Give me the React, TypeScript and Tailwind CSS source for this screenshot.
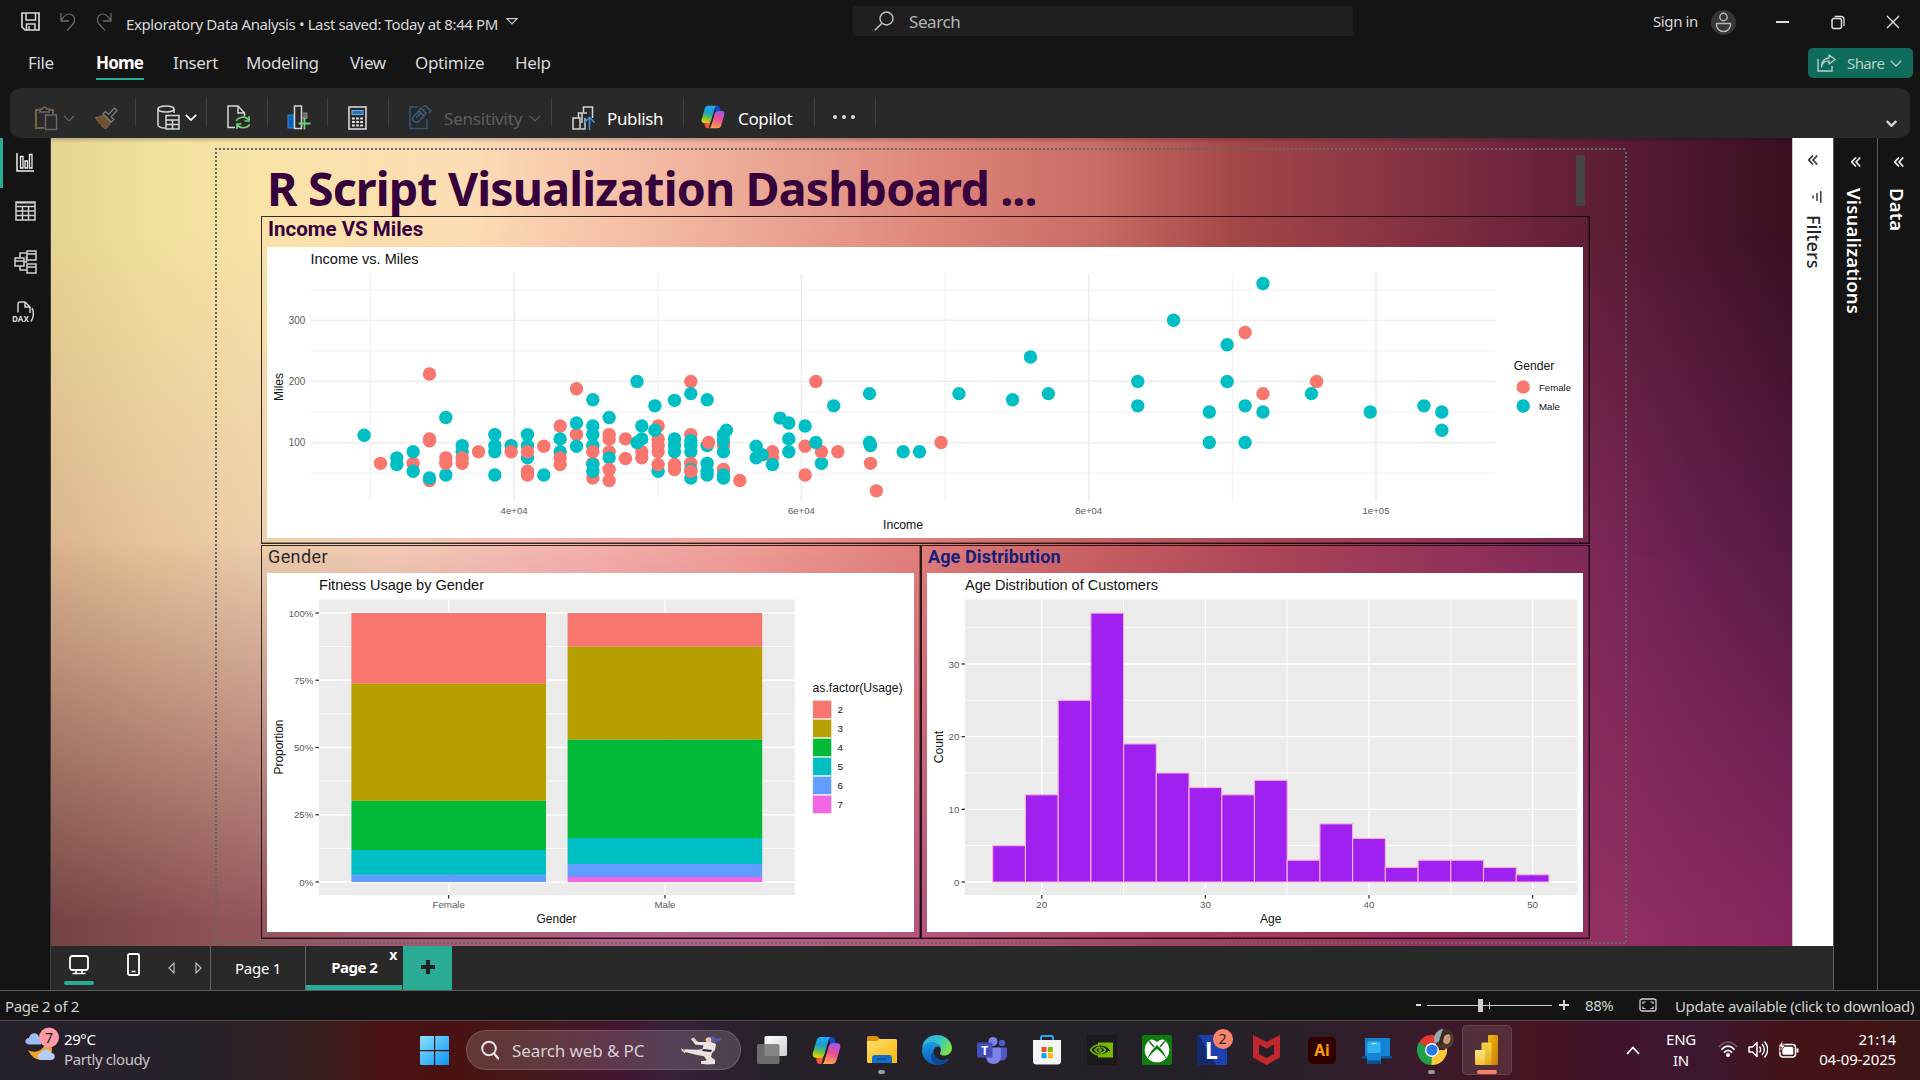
import React from "react";

type P = [number, number, 0 | 1];
const K = (k: number) => 29562 + 1137 * k;
const F = 0;
const M = 1;

/* [income, miles, gender] in drawing order */
const POINTS: P[] = [
  [K(0), 112, M],
  [K(1), 66, F],
  [K(2), 75, M], [K(2), 64, M],
  [K(3), 66, F], [K(3), 85, M], [K(3), 53, M],
  [K(4), 212, F], [K(4), 106, F], [K(4), 103, F], [K(4), 38, F], [K(4), 42, M],
  [K(5), 141, M], [K(5), 47, M], [K(5), 75, F], [K(5), 66, F],
  [K(6), 95, M], [K(6), 85, M], [K(6), 75, F], [K(6), 66, F],
  [K(7), 85, F],
  [K(8), 113, M], [K(8), 95, M], [K(8), 85, M], [K(8), 47, M],
  [K(9), 95, M], [K(9), 85, F],
  [K(10), 113, M], [K(10), 95, M], [K(10), 75, M], [K(10), 85, F], [K(10), 53, F], [K(10), 47, F],
  [K(11), 94, F], [K(11), 47, M],
  [K(12), 127, F], [K(12), 85, M], [K(12), 106, M], [K(12), 75, F], [K(12), 64, F],
  [K(13), 188, F], [K(13), 113, F], [K(13), 132, M], [K(13), 94, M],
  [K(14), 170, M], [K(14), 127, M], [K(14), 113, M], [K(14), 95, M], [K(14), 66, F], [K(14), 85, F], [K(14), 42, F], [K(14), 64, M], [K(14), 53, M],
  [K(15), 141, M], [K(15), 113, F], [K(15), 106, F], [K(15), 85, F], [K(15), 75, M], [K(15), 56, F], [K(15), 38, F],
  [K(16), 106, F], [K(16), 74, F],
  [K(17), 127, M], [K(17), 85, F], [K(17), 75, F],
  [48556, 200, M], [48556, 100, M], [K(17), 106, M],
  [K(18), 127, F], [K(18), 106, F], [K(18), 95, F], [K(18), 85, F], [K(18), 53, M], [K(18), 64, F],
  [49801, 160, M], [49801, 120, M],
  [K(19), 169, M], [K(19), 106, M], [K(19), 95, M], [K(19), 85, M], [K(19), 64, F], [K(19), 56, F],
  [K(20), 200, F], [K(20), 180, M], [K(20), 113, F], [K(20), 103, M], [K(20), 95, M], [K(20), 85, M], [K(20), 42, M], [K(20), 66, F], [K(20), 56, M], [K(20), 53, F],
  [K(21), 170, M], [K(21), 95, M], [K(21), 66, M], [K(21), 53, M], [K(21), 47, M], [53536, 100, F],
  [K(22), 95, F], [K(22), 56, F], [K(22), 113, M], [K(22), 103, M], [K(22), 85, M], [K(22), 47, M], [K(22), 42, M], [54781, 120, M],
  [K(23), 38, F],
  [K(24), 94, M], [K(24), 75, M],
  [K(25), 85, F], [K(25), 75, F], [K(25), 64, M], [57271, 80, M],
  [58516, 140, M], [K(26), 132, M], [K(26), 106, M], [K(26), 85, M],
  [K(27), 127, M], [K(27), 94, F], [K(27), 47, F],
  [K(28), 66, M], [K(28), 85, F], [61006, 200, F], [61006, 100, M],
  [K(29), 85, F],
  [62251, 160, M], [64741, 180, M], [64741, 100, M], [64809, 95, M], [64809, 66, F],
  [65220, 21, F], [67083, 85, M], [68220, 85, M], [69721, 100, F],
  [70966, 180, M], [74701, 170, M], [75946, 240, M], [77191, 180, M],
  [83416, 200, M], [83416, 160, M], [85906, 300, M], [88396, 150, M], [88396, 100, M],
  [89641, 260, M], [89641, 200, M], [90886, 280, F], [90886, 160, M], [90886, 100, M],
  [92131, 360, M], [92131, 180, F], [92131, 150, M], [95508, 180, M], [95866, 200, F],
  [99601, 150, M], [103336, 160, M], [104581, 150, M], [104581, 120, M],
];

const LS = "'Liberation Sans', Arial, sans-serif";
const sx = (v: number) => 514.1 + (v - 40000) * 0.014365;
const sy = (m: number) => 503.7 - 0.6115 * m;

function Tx(p: { x: number; y: number; w?: number; s: number; c?: string; a?: "start" | "middle" | "end"; t: string; r?: boolean }) {
  return (
    <text
      x={p.x}
      y={p.y}
      fontSize={p.s}
      fill={p.c ?? "#111"}
      textAnchor={p.a ?? "start"}
      textLength={p.w}
      lengthAdjust="spacingAndGlyphs"
      fontFamily={LS}
      transform={p.r ? `rotate(-90 ${p.x} ${p.y})` : undefined}
    >
      {p.t}
    </text>
  );
}

function Scatter() {
  return (
    <svg className="block h-full w-full" viewBox="267 247 1316 291" preserveAspectRatio="none">
      <rect x="267" y="247" width="1316" height="291" fill="#fff" />
      {[50, 150, 250, 350].map((m) => (
        <line key={m} x1="310.5" x2="1495.7" y1={sy(m)} y2={sy(m)} stroke="#f3f3f3" strokeWidth="1" />
      ))}
      {[30000, 50000, 70000, 90000].map((v) => (
        <line key={v} y1="273" y2="501" x1={sx(v)} x2={sx(v)} stroke="#f1f1f1" strokeWidth="1" />
      ))}
      {[100, 200, 300].map((m) => (
        <g key={m}>
          <line x1="310.5" x2="1495.7" y1={sy(m)} y2={sy(m)} stroke="#ebebeb" strokeWidth="1.2" />
          <Tx x={305.3} y={sy(m) + 3.8} s={10} w={16.5} c="#5a5a5a" a="end" t={String(m)} />
        </g>
      ))}
      {[40000, 60000, 80000, 100000].map((v, i) => (
        <g key={v}>
          <line y1="273" y2="501" x1={sx(v)} x2={sx(v)} stroke="#ebebeb" strokeWidth="1.5" />
          <Tx x={sx(v)} y={514} s={9.8} w={27} c="#5a5a5a" a="middle" t={["4e+04", "6e+04", "8e+04", "1e+05"][i]} />
        </g>
      ))}
      {POINTS.map(([x, y, g], i) => (
        <circle key={i} cx={sx(x)} cy={sy(y)} r="6.7" fill={g ? "#00bfc4" : "#f8766d"} />
      ))}
      <Tx x={310.5} y={263.8} s={14.2} w={108} t="Income vs. Miles" />
      <Tx x={903} y={529} s={12} w={40} a="middle" t="Income" />
      <Tx x={282.5} y={387} s={12} w={28} a="middle" t="Miles" r />
      <Tx x={1513.7} y={369.6} s={12} w={40.5} t="Gender" />
      <circle cx="1523.2" cy="387" r="6.7" fill="#f8766d" />
      <circle cx="1523.2" cy="406" r="6.7" fill="#00bfc4" />
      <Tx x={1539} y={391} s={9.8} w={32} t="Female" />
      <Tx x={1539} y={410} s={9.8} w={21} t="Male" />
    </svg>
  );
}

const USAGE = ["#f8766d", "#b79f00", "#00ba38", "#00bfc4", "#619cff", "#f564e3"];

function Stack(p: { x: number; ys: number[] }) {
  return (
    <g>
      {p.ys.slice(0, -1).map((y, i) => (
        <rect key={i} x={p.x} y={y} width="194.6" height={p.ys[i + 1] - y} fill={USAGE[i]} />
      ))}
    </g>
  );
}

function Usage() {
  return (
    <svg className="block h-full w-full" viewBox="267 573 647 359" preserveAspectRatio="none">
      <rect x="267" y="573" width="647" height="359" fill="#fff" />
      <rect x="319" y="599.5" width="475.6" height="295.5" fill="#ebebeb" />
      {[646.6, 713.9, 781.1, 848.4].map((y) => (
        <line key={y} x1="319" x2="794.6" y1={y} y2={y} stroke="#fff" strokeWidth="0.8" />
      ))}
      {["100%", "75%", "50%", "25%", "0%"].map((t, i) => (
        <g key={t}>
          <line x1="319" x2="794.6" y1={613 + i * 67.25} y2={613 + i * 67.25} stroke="#fff" strokeWidth="1.4" />
          <line x1="315.5" x2="319" y1={613 + i * 67.25} y2={613 + i * 67.25} stroke="#333" strokeWidth="1.3" />
          <Tx x={313.3} y={616.6 + i * 67.25} s={9.8} w={[24.5, 19.3, 19.3, 19.3, 14][i]} c="#5a5a5a" a="end" t={t} />
        </g>
      ))}
      {[448.7, 665].map((x, i) => (
        <g key={x}>
          <line x1={x} x2={x} y1="599.5" y2="895" stroke="#fff" strokeWidth="1.4" />
          <line x1={x} x2={x} y1="895" y2="898.5" stroke="#333" strokeWidth="1.3" />
          <Tx x={x} y={908} s={9.8} w={[32.5, 21][i]} c="#5a5a5a" a="middle" t={["Female", "Male"][i]} />
        </g>
      ))}
      <Stack x={351.4} ys={[613, 683.7, 800.8, 850, 874.9, 882]} />
      <Stack x={567.6} ys={[613, 646.8, 739.7, 838, 864, 877, 882]} />
      <Tx x={319} y={590} s={14.2} w={165} t="Fitness Usage by Gender" />
      <Tx x={556.5} y={922.7} s={12} w={40} a="middle" t="Gender" />
      <Tx x={282.7} y={747} s={12} w={55} a="middle" t="Proportion" r />
      <Tx x={812.6} y={692} s={12} w={90} t="as.factor(Usage)" />
      {USAGE.map((c, i) => (
        <g key={c}>
          <rect x="812.8" y={700.3 + i * 19} width="18.6" height="18.2" fill={c} stroke="#ebebeb" strokeWidth="0.6" />
          <Tx x={837.5} y={712.8 + i * 19} s={9.8} t={String(i + 2)} />
        </g>
      ))}
    </svg>
  );
}

const COUNTS = [5, 12, 25, 37, 19, 15, 13, 12, 14, 3, 8, 6, 2, 3, 3, 2, 1];

function Ages() {
  const ax = (v: number) => 1041.8 + (v - 20) * 16.36;
  const ay = (v: number) => 882 - v * 7.267;
  return (
    <svg className="block h-full w-full" viewBox="927 573 656 359" preserveAspectRatio="none">
      <rect x="927" y="573" width="656" height="359" fill="#fff" />
      <rect x="965" y="599.5" width="612.3" height="295.5" fill="#ebebeb" />
      {[5, 15, 25, 35].map((v) => (
        <line key={v} x1="965" x2="1577.3" y1={ay(v)} y2={ay(v)} stroke="#fff" strokeWidth="0.8" />
      ))}
      {[25, 35, 45].map((v) => (
        <line key={v} y1="599.5" y2="895" x1={ax(v)} x2={ax(v)} stroke="#fff" strokeWidth="0.8" />
      ))}
      {[0, 10, 20, 30].map((v) => (
        <g key={v}>
          <line x1="965" x2="1577.3" y1={ay(v)} y2={ay(v)} stroke="#fff" strokeWidth="1.4" />
          <line x1="961.5" x2="965" y1={ay(v)} y2={ay(v)} stroke="#333" strokeWidth="1.3" />
          <Tx x={959.5} y={ay(v) + 3.6} s={9.8} c="#5a5a5a" a="end" t={String(v)} />
        </g>
      ))}
      {[20, 30, 40, 50].map((v) => (
        <g key={v}>
          <line y1="599.5" y2="895" x1={ax(v)} x2={ax(v)} stroke="#fff" strokeWidth="1.4" />
          <line x1={ax(v)} x2={ax(v)} y1="895" y2="898.5" stroke="#333" strokeWidth="1.3" />
          <Tx x={ax(v)} y={908} s={9.8} c="#5a5a5a" a="middle" t={String(v)} />
        </g>
      ))}
      {COUNTS.map((n, i) => (
        <rect key={i} x={ax(17 + 2 * i)} y={ay(n)} width="32.72" height={n * 7.267} fill="#a020f0" stroke="#f7b3d2" strokeWidth="1.1" />
      ))}
      <Tx x={965} y={590} s={14.2} w={193} t="Age Distribution of Customers" />
      <Tx x={1270.8} y={922.7} s={12} a="middle" t="Age" />
      <Tx x={943.3} y={747} s={12} w={32.5} a="middle" t="Count" r />
    </svg>
  );
}

function Chev({ c = "#d6d6d6", s = 1.5, w = 12, h = 7 }: { c?: string; s?: number; w?: number; h?: number }) {
  return (
    <svg width={w} height={h} viewBox="0 0 12 7" fill="none" stroke={c} strokeWidth={s} className="shrink-0">
      <path d="M.8.8 6 6 11.2.8" />
    </svg>
  );
}

function Svg({ w, h, children, vb }: { w: number; h: number; vb?: string; children: React.ReactNode }) {
  return (
    <svg width={w} height={h} viewBox={vb ?? `0 0 ${w} ${h}`} fill="none" className="shrink-0">
      {children}
    </svg>
  );
}

function Copilot({ id, size }: { id: string; size: number }) {
  return (
    <Svg w={size} h={size} vb="0 0 28 28">
      <defs>
        <linearGradient id={id + "a"} x1="0.5" y1="0" x2="0.3" y2="1">
          <stop offset="0" stopColor="#20a7f5" />
          <stop offset=".4" stopColor="#1aa0c8" />
          <stop offset=".7" stopColor="#6cc04a" />
          <stop offset="1" stopColor="#f5d400" />
        </linearGradient>
        <linearGradient id={id + "b"} x1="0.7" y1="0" x2="0.4" y2="1">
          <stop offset="0" stopColor="#a257e8" />
          <stop offset=".5" stopColor="#ee4f8f" />
          <stop offset="1" stopColor="#ffa44a" />
        </linearGradient>
      </defs>
      <path d="M16 1h3c1.600 0 2.600.8 3.100 2.400L23.500 8h-6z" fill="#1447c9" />
      <path d="M9 27H7.500c-1.500 0-2.600-.9-3-2.400L4 20h7z" fill="#f2583e" />
      <path d="M8.500 1h9.800c-1.500.4-2 1.800-2.500 3.600L12 17.500c-.7 2.300-1.800 3.500-4.200 3.500H3.500C1 21 .2 19 .8 16.700L4.300 4.500C5 2.200 6.400 1 8.500 1z" fill={`url(#${id}a)`} />
      <path d="M19.500 27H9.700c1.500-.4 2-1.800 2.500-3.600L16 10.500C16.700 8.200 17.800 7 20.200 7h4.300c2.500 0 3.300 2 2.700 4.300l-3.500 12.200c-.7 2.300-2.100 3.500-4.200 3.500z" fill={`url(#${id}b)`} />
    </Svg>
  );
}

const Sep = () => <div className="mb-[2px] h-[30px] w-px shrink-0 bg-[#404040]" />;

function TitleBar() {
  return (
    <div className="flex h-[44px] shrink-0 items-start text-[15px] leading-none tracking-[-0.3px] text-[#d8d8d8]">
      <div className="flex w-[126px] gap-[20px] pt-[12px] pl-[21px]">
        <Svg w={19} h={19}>
          <path d="M1 1h17v17H4l-3-3z" stroke="#d8d8d8" strokeWidth="1.700" />
          <path d="M5 1v7h9.500V1M5.500 18v-6h8.500v6M8 14v4" stroke="#d8d8d8" strokeWidth="1.500" />
        </Svg>
        <Svg w={16} h={19}>
          <path d="M1 1v8h8M1.500 8.500C4 3.500 8 1 11.500 2.500S15.500 9 13 12L7 18.500" stroke="#686868" strokeWidth="1.300" />
        </Svg>
        <Svg w={16} h={19}>
          <path d="M15 1v8H7M14.500 8.500C12 3.500 8 1 4.500 2.500S.5 9 3 12l6 6.500" stroke="#686868" strokeWidth="1.300" />
        </Svg>
      </div>
      <div className="w-[380px] pt-[17px] tracking-[-0.39px] whitespace-nowrap">Exploratory Data Analysis • Last saved: Today at 8:44 PM</div>
      <div className="w-[347px] pt-[18px]">
        <Svg w={12} h={7}>
          <path d="M1 .7h10L6 6z" stroke="#c8c8c8" strokeWidth="1.200" />
        </Svg>
      </div>
      <div className="mt-[6px] flex h-[30px] w-[500px] items-center rounded-[3px] bg-[#1f1f1f] pl-[21px] text-[17px] tracking-[-0.4px] text-[#b4b4b4]">
        <Svg w={20} h={20}>
          <circle cx="12.500" cy="7.500" r="6.500" stroke="#c4c4c4" strokeWidth="1.400" />
          <path d="M8 12.300.8 19.300" stroke="#c4c4c4" strokeWidth="1.500" />
        </Svg>
        <span className="pl-[15px]">Search</span>
      </div>
      <div className="ml-auto flex h-[44px] items-center">
        <span className="w-[58px] pb-[1px] tracking-[-0.4px] whitespace-nowrap">Sign in</span>
        <Svg w={25} h={25}>
          <circle cx="12.500" cy="12.500" r="12.500" fill="#363636" />
          <circle cx="12.500" cy="7" r="3.700" stroke="#b8b8b8" strokeWidth="1.400" />
          <path d="M5.500 13.500h14c.8 4-2.500 8-7 8s-7.800-4-7-8z" stroke="#b8b8b8" strokeWidth="1.400" />
        </Svg>
        <div className="ml-[40px] h-[1.500px] w-[13px] bg-[#dedede]" />
        <div className="ml-[42px]">
          <Svg w={14} h={15}>
            <rect x="1" y="3.500" width="9.500" height="10" rx="2" stroke="#dedede" strokeWidth="1.500" />
            <path d="M3.500 1.500H10c2 0 3 1 3 3V11" stroke="#dedede" strokeWidth="1.300" />
          </Svg>
        </div>
        <div className="mr-[20px] ml-[41px]">
          <Svg w={14} h={14}>
            <path d="M1 1l12 12M13 1 1 13" stroke="#e0e0e0" strokeWidth="1.400" />
          </Svg>
        </div>
      </div>
    </div>
  );
}

function MenuBar() {
  return (
    <div className="flex h-[44px] shrink-0 items-start pt-[9px] pl-[28px] text-[17px] leading-none tracking-[-0.35px] text-[#d8d8d8]">
      <span className="w-[68px] pt-[1px]">File</span>
      <div className="w-[77px]">
        <div className="h-[27px] w-[48px] border-b-[2px] border-[#2aab94] pt-[1px] font-bold tracking-[-0.8px] text-white">Home</div>
      </div>
      <span className="w-[73px] pt-[1px]">Insert</span>
      <span className="w-[104px] pt-[1px]">Modeling</span>
      <span className="w-[65px] pt-[1px]">View</span>
      <span className="w-[100px] pt-[1px]">Optimize</span>
      <span className="pt-[1px]">Help</span>
      <div className="-mt-[5px] mr-[7px] ml-auto flex h-[30px] w-[105px] items-center rounded-[5px] bg-[#0f6b5a] pl-[9px] text-[15px] text-[#b9cfc9]">
        <Svg w={19} h={18}>
          <path d="M1 5v12h14v-5" stroke="#b9cfc9" strokeWidth="1.400" />
          <path d="M4.500 13C5 8.500 8 6.800 12 6.800V10L18.200 5.500 12 1v3C7 4.300 4.500 8 4.500 13z" stroke="#b9cfc9" strokeWidth="1.300" strokeLinejoin="round" />
        </Svg>
        <span className="pl-[11px] tracking-[-0.6px]">Share</span>
        <div className="ml-auto pr-[11px]">
          <Chev c="#b9cfc9" s={1.3} />
        </div>
      </div>
    </div>
  );
}

function Ribbon() {
  return (
    <div className="z-10 mr-[10px] ml-[10px] flex h-[50px] shrink-0 items-center rounded-[10px] bg-[#292929] text-[17px] leading-none tracking-[-0.35px] text-white">
      <div className="flex w-[125px] items-center pt-[11px] pl-[25px]">
        <Svg w={23} h={25}>
          <path d="M4 4H1v18h8M15 4h3v4" stroke="#7a6242" strokeWidth="2" />
          <path d="M5 6V3h2.500C8 .5 11 .5 11.500 3H14v3z" stroke="#6a6a6a" strokeWidth="1.500" />
          <rect x="10.500" y="9" width="11" height="14.500" stroke="#6a6a6a" strokeWidth="1.500" />
        </Svg>
        <div className="ml-[5px]"><Chev c="#6a6a6a" s={1.2} /></div>
        <div className="ml-[19px]">
          <Svg w={24} h={23}>
            <path d="M1.500 10.500c4 0 6-1 8.500-3l7 7c-1 3-3 5-5.500 7.500-1-1.500-2-2-3.500-2.500 0-1-.5-2-1.500-2.500C5 15.500 2.500 13 1.500 10.500z" fill="#6e5230" stroke="#8a6f47" strokeWidth="1" />
            <path d="M9 7l2.500-2.500 3 3L20.500 1 23 3.500 17 10l3 2.500-3 2.500z" stroke="#7a7a7a" strokeWidth="1.300" />
          </Svg>
        </div>
      </div>
      <Sep />
      <div className="flex w-[70px] items-center pt-[9px] pl-[21px]">
        <Svg w={23} h={25}>
          <ellipse cx="9" cy="4" rx="8" ry="3" stroke="#d6d6d6" strokeWidth="1.500" />
          <path d="M1 4v16c0 1.500 3 3 7 3M17 4v4" stroke="#d6d6d6" strokeWidth="1.500" />
          <path d="M9 10.500h13V24H9zM9 15h13M9 19.500h13M15.500 15v9" stroke="#d6d6d6" strokeWidth="1.500" />
        </Svg>
        <div className="ml-[5px]"><Chev c="#fff" s={1.7} /></div>
      </div>
      <Sep />
      <div className="flex w-[60px] items-center pt-[9px] pl-[20px]">
        <Svg w={24} h={25}>
          <path d="M8 22.500H1V1h10l6.500 7v3M11 1v7h6.500" stroke="#d6d6d6" strokeWidth="1.500" />
          <path d="M9.500 16c1-4 9.500-6 12.500-.500M22 11v5h-4.500M22.500 19c-1 4-9.500 5.500-12.500.5M10 24v-5h4.500" stroke="#73cf7c" strokeWidth="1.600" />
        </Svg>
      </div>
      <Sep />
      <div className="flex w-[59px] items-center pt-[9px] pl-[19px]">
        <Svg w={25} h={25}>
          <rect x="1" y="10" width="6" height="13" fill="#0b62b5" stroke="#2f8ce0" />
          <rect x="7.500" y="1" width="7" height="22.500" stroke="#d6d6d6" strokeWidth="1.500" />
          <path d="M15.500 8h4.500v5.500h-4.500" fill="#6a6a6a" stroke="#8a8a8a" />
          <path d="M17.500 12.500v12M11.500 18.500h12" stroke="#6fd07a" strokeWidth="1.800" />
        </Svg>
      </div>
      <Sep />
      <div className="flex w-[60px] items-center pt-[9px] pl-[20px]">
        <Svg w={19} h={24}>
          <rect x="1" y="1" width="17" height="22" stroke="#d6d6d6" strokeWidth="1.600" />
          <rect x="4" y="4.500" width="11" height="4" fill="#2d6fb0" stroke="#63b0ee" />
          <path d="M4 12.500h11M4 16h11M4 19.500h11" stroke="#e0e0e0" strokeWidth="2.200" strokeDasharray="2.800 1.300" />
        </Svg>
      </div>
      <Sep />
      <div className="flex w-[162px] items-center pt-[9px] pl-[20px] text-[#5e5e5e]">
        <Svg w={23} h={25}>
          <path d="M9 2H1v21.500h17V14" stroke="#2f5673" strokeWidth="1.600" />
          <path d="M4 12l6-6 5 5-6 6c-3 1-6-2-5-5zM10 5l2-2 5 5-1.500 2M14 2l2-1.500L22 6l-2 2M7 13l5-5" stroke="#35607f" strokeWidth="1.500" />
        </Svg>
        <span className="ml-[12px] w-[83px] pt-[2px] text-[17px] tracking-[-0.2px]">Sensitivity</span>
        <div className="pt-[1px] pl-[2px]"><Chev c="#5e5e5e" s={1.2} /></div>
      </div>
      <Sep />
      <div className="flex w-[131px] items-center pt-[9px] pl-[20px]">
        <Svg w={24} h={24}>
          <path d="M1 12h7v11H1zM6.500 11.500V7h4.500M11.500 6V1h9v11M15 7h-5v10" stroke="#d6d6d6" strokeWidth="1.500" />
          <path d="M9 23h4V12" stroke="#d6d6d6" strokeWidth="1.400" />
          <path d="M17.500 24V12M12.500 16.500l5-5 5 5" stroke="#3c93dc" strokeWidth="1.600" />
        </Svg>
        <span className="ml-[11px] pt-[2px]">Publish</span>
      </div>
      <Sep />
      <div className="flex w-[130px] items-center pt-[7px] pl-[17px]">
        <Copilot id="r" size={24} />
        <span className="ml-[13px] pt-[4px]">Copilot</span>
      </div>
      <Sep />
      <div className="flex w-[60px] items-center gap-[5px] pt-[8px] pl-[18px]">
        <i className="size-[4px] rounded-full bg-[#dcdcdc]" />
        <i className="size-[4px] rounded-full bg-[#dcdcdc]" />
        <i className="size-[4px] rounded-full bg-[#dcdcdc]" />
      </div>
      <Sep />
      <div className="mr-[13px] ml-auto pt-[20px]"><Chev s={2.6} w={11} h={7} /></div>
    </div>
  );
}

function Rail() {
  const c = { stroke: "#d0d0d0", strokeWidth: 1.5 };
  return (
    <div className="flex w-[51px] shrink-0 flex-col border-r border-[#3d3d3d] bg-[#141414]">
      <div className="flex h-[50px] items-center border-l-[3px] border-[#2aab94] pl-[13px] pb-[2px]">
        <Svg w={18} h={19}>
          <path d="M1 0v18h17" {...c} stroke="#f0f0f0" />
          <path d="M4.500 3.500h2.500V15H4.500zM9 8h2.500v7H9zM13.500 1.500H16V15h-2.500z" {...c} stroke="#f0f0f0" strokeWidth={1.3} />
        </Svg>
      </div>
      <div className="flex h-[47px] items-center justify-center pb-[1px]">
        <Svg w={21} h={20}>
          <path d="M1 1h19v18H1zM1 5.500h19M1 10h19M1 14.500h19M7.500 5.500V19M13.500 5.500V19" {...c} />
          <path d="M1 1.800h19" {...c} />
        </Svg>
      </div>
      <div className="flex h-[53px] items-center justify-center">
        <Svg w={23} h={24}>
          <path d="M13 1h9v9h-9zM13 4h9M13 14h9v9h-9zM13 17h9M1 8h9v8H1zM1 11h9M13 3H6v5M6 16v4h7M10 12h2.500V6" {...c} />
        </Svg>
      </div>
      <div className="flex h-[48px] items-center justify-center pr-[2px]">
        <Svg w={26} h={22}>
          <path d="M7 11.500V3c0-1.500 1-2 2-2h5l5 5v6M14 1v5h5M21 7c2 3 2 9-1 13.500" {...c} />
          <text x="1" y="20.500" fontFamily="'Noto Sans', sans-serif" fontWeight="700" fontSize="9" fill="#d8d8d8" textLength="17" lengthAdjust="spacingAndGlyphs">DAX</text>
        </Svg>
      </div>
    </div>
  );
}

function Report() {
  return (
    <div className="relative h-[808px] w-[1741px] overflow-hidden bg-[linear-gradient(90deg,#e6d592_0%,#f1e19e_6%,#fae3a9_13%,#fcdcb5_24%,#f5bfa6_33%,#e9a391_42%,#dc8277_52%,#c86c65_60%,#a44748_68%,#883444_77%,#68213a_86%,#521a32_92%,#3a1022_100%)]">
      <div className="absolute inset-0 bg-[linear-gradient(90deg,#d9b38e_0%,#e6c39b_6%,#eccdac_12%,#f2cab6_20%,#f5b2ae_30%,#ef9c96_40%,#e07e79_50%,#c95f62_60%,#ad4558_70%,#93345a_80%,#802958_88%,#682050_94%,#561a44_100%)] [mask-image:linear-gradient(180deg,transparent_12%,black_52%)]" />
      <div className="absolute inset-0 bg-[linear-gradient(90deg,#754444_0%,#8f5358_10%,#a25970_20%,#b26189_35%,#b4567c_50%,#a83f60_65%,#98305f_80%,#903062_90%,#84265e_100%)] [mask-image:linear-gradient(180deg,transparent_50%,black_97%)]" />
      <div className="absolute inset-x-0 top-0 h-[5px] bg-gradient-to-b from-black/20 to-transparent" />
      <div className="relative flex h-full flex-col pt-[10px] pl-[164px]">
        <div className="h-[2px] w-[1412px] bg-[repeating-linear-gradient(90deg,#666_0_2px,transparent_2px_4px)]" />
        <div className="flex h-[792px] w-[1412px]">
          <div className="w-[2px] bg-[repeating-linear-gradient(180deg,transparent_0_2px,#666_2px_4px)]" />
          <div className="ml-[44px] flex w-[1329px] flex-col">
            <div className="flex h-[66px] items-start justify-between">
              <div className="pt-[15px] pl-[6px] font-['Noto_Sans',sans-serif] text-[46.500px] leading-none font-bold tracking-[-0.85px] whitespace-nowrap text-[#36003d]">
                R Script Visualization Dashboard ...
              </div>
              <div className="mt-[5px] mr-[5px] h-[51px] w-[9px] bg-[#444]" />
            </div>
            <div className="h-[328px] border border-black/80 px-[5px] shadow-[inset_-1px_-1px_0_rgba(0,0,0,0.35)]">
              <div className="h-[30px] pl-[1px] font-['Roboto',sans-serif] text-[20.500px] leading-[24px] font-bold whitespace-nowrap text-[#36003d]">Income VS Miles</div>
              <div className="h-[291px] w-[1316px]"><Scatter /></div>
            </div>
            <div className="mt-px flex h-[394px]">
              <div className="w-[660px] border border-black/80 px-[5px] shadow-[inset_-1px_-1px_0_rgba(0,0,0,0.35)]">
                <div className="h-[27px] pl-[1px] font-['Roboto',sans-serif] text-[18px] leading-[21px] tracking-[0.4px] text-[#2a2a2a]">Gender</div>
                <div className="h-[359px] w-[647px]"><Usage /></div>
              </div>
              <div className="w-[669px] border border-black/80 px-[5px] shadow-[inset_-1px_-1px_0_rgba(0,0,0,0.35)]">
                <div className="h-[27px] pl-[1px] font-['Roboto',sans-serif] text-[18px] leading-[21px] font-bold tracking-[0.1px] text-[#121f7c]">Age Distribution</div>
                <div className="h-[359px] w-[656px]"><Ages /></div>
              </div>
            </div>
          </div>
          <div className="ml-auto w-[2px] bg-[repeating-linear-gradient(180deg,transparent_0_2px,#666_2px_4px)]" />
        </div>
        <div className="h-[2px] w-[1412px] bg-[repeating-linear-gradient(90deg,#666_0_2px,transparent_2px_4px)]" />
      </div>
    </div>
  );
}

function Dbl({ c }: { c: string }) {
  return (
    <Svg w={10} h={10}>
      <path d="M5 .5.8 5 5 9.500M9.300.5 5.100 5l4.200 4.500" stroke={c} strokeWidth="1.700" />
    </Svg>
  );
}

function PageTabs() {
  return (
    <div className="flex h-[44px] shrink-0 bg-[#292929] text-[15px] leading-none tracking-[-0.3px] text-white">
      <div className="flex w-[159px]">
        <div className="flex w-[51px] flex-col items-center pt-[9px] pl-[4px]">
          <Svg w={20} h={20}>
            <rect x="1" y="1" width="18" height="14" rx="2.500" stroke="#fff" strokeWidth="1.800" />
            <path d="M7 15v3M13 15v3M3.500 18.500h13" stroke="#fff" strokeWidth="1.600" />
          </Svg>
          <div className="mt-[6px] h-[4px] w-[30px] rounded-full bg-[#2aab94]" />
        </div>
        <div className="w-[66px] pt-[7px] pl-[25px]">
          <Svg w={13} h={23}>
            <rect x="1" y="1" width="11" height="21" rx="1.500" stroke="#fff" strokeWidth="1.800" />
            <path d="M4.500 18.500h4" stroke="#fff" strokeWidth="1.600" />
          </Svg>
        </div>
        <div className="flex gap-[20px] pt-[16px]">
          <Svg w={7} h={12}><path d="M6 1v10L1 6z" stroke="#b8b8b8" strokeWidth="1.200" /></Svg>
          <Svg w={7} h={12}><path d="M1 1v10l5-5z" stroke="#b8b8b8" strokeWidth="1.200" /></Svg>
        </div>
      </div>
      <div className="flex w-[96px] items-center justify-center border-x border-[#666]">Page 1</div>
      <div className="flex w-[96px] items-start justify-end border-b-[5px] border-[#2aab94] font-bold">
        <span className="w-[58px] pt-[14px] tracking-[-0.5px]">Page 2</span>
        <span className="pt-[2px] pr-[5px] text-[14px]">x</span>
      </div>
      <div className="ml-px flex w-[49px] items-center justify-center bg-[#2aab94] pb-[2px]">
        <Svg w={14} h={14}><path d="M7 0v14M0 7h14" stroke="#222" strokeWidth="4" /></Svg>
      </div>
    </div>
  );
}

function StatusBar() {
  return (
    <div className="flex h-[30px] shrink-0 items-center border-t border-[#5c5c5c] bg-[#141414] pl-[5px] text-[15px] leading-none tracking-[-0.4px] text-[#d0d0d0]">
      <span className="pt-[2px]">Page 2 of 2</span>
      <div className="ml-auto flex h-full items-center pb-[1px]">
        <div className="h-[2px] w-[5px] bg-[#ddd]" />
        <div className="ml-[6px] flex w-[125px] items-center">
          <div className="h-px w-[51px] bg-[#ccc]" />
          <div className="h-[13px] w-[5px] bg-[#ccc]" />
          <div className="h-px w-[6px] bg-[#ccc]" />
          <div className="h-[7px] w-px bg-[#ccc]" />
          <div className="h-px flex-1 bg-[#ccc]" />
        </div>
        <div className="ml-[7px]"><Svg w={10} h={10}><path d="M5 0v10M0 5h10" stroke="#ddd" strokeWidth="1.800" /></Svg></div>
        <span className="ml-[16px] w-[54px]">88%</span>
        <Svg w={18} h={14}>
          <rect x="1" y="1" width="16" height="12" rx="2" stroke="#d0d0d0" strokeWidth="1.300" />
          <path d="M4 6V4h2.500M11.500 4H14v2M14 8.500v2h-2.500M6.500 10.500H4v-2" stroke="#d0d0d0" strokeWidth="1.200" />
        </Svg>
        <span className="ml-[18px] w-[245px] pt-[3px] tracking-[-0.38px] whitespace-nowrap">Update available (click to download)</span>
      </div>
    </div>
  );
}

function TaskApp({ children, run, active }: { children: React.ReactNode; run?: boolean; active?: boolean }) {
  return (
    <div className="flex w-[55px] shrink-0 flex-col items-center pt-[4px]">
      <div className={active ? "flex h-[50px] w-[50px] flex-col items-center rounded-[5px] border border-white/10 bg-white/10" : "flex h-[50px] w-[50px] flex-col items-center border border-transparent"}>
        <div className="flex h-[44px] items-center pt-[5px] pb-[1px]">{children}</div>
        {run && <div className="mt-[1px] h-[4px] w-[7px] rounded-full bg-[#9a9a9a]" />}
        {active && <div className="mt-[1px] h-[4px] w-[20px] shrink-0 rounded-full bg-[#f7836a]" />}
      </div>
    </div>
  );
}

function Taskbar() {
  return (
    <div className="flex h-[60px] shrink-0 border-t border-[#55484c] bg-[linear-gradient(90deg,#25212a_0%,#27212a_11%,#35201f_16%,#4a1215_20%,#481312_24%,#45181c_28%,#461530_32%,#37203a_35%,#262129_40%,#242129_62%,#2b2029_68%,#3a1a2c_74%,#46141f_80%,#40142f_85%,#3c1730_89%,#441318_93%,#421316_97%,#3a1818_100%)] text-[15px] leading-none text-white">
      <div className="flex w-[420px] pt-[5px] pl-[25px]">
        <Svg w={35} h={38}>
          <path d="M3 24c7 4 16 1 18-9 6 3 8 10 4 15s-16 7-22-6z" fill="#f2a02c" />
          <path d="M5 18.500C-2 18.500 0 12 4 12c1-6 9-6 10-1 5 0 5 7.500 0 7.500z" fill="#9dbdf2" />
          <path d="M16 34c-5-1-4-7 0-7 1-5 9-5 10 0 5 0 5 7 0 7z" fill="#b3cdf8" />
          <circle cx="24" cy="11.500" r="10" fill="#ff9aa6" />
          <text x="24" y="16.500" textAnchor="middle" fontSize="14" fill="#1a1a1a" fontFamily="'Noto Sans', sans-serif">7</text>
        </Svg>
        <div className="ml-[4px] flex flex-col gap-[5px] pt-[6px] tracking-[-0.4px]">
          <span>29°C</span>
          <span className="whitespace-nowrap text-[#c9c5c8]">Partly cloudy</span>
        </div>
      </div>
      <div className="w-[46px] pt-[15px]">
        <Svg w={29} h={29}>
          <defs>
            <linearGradient id="win" x1="0" y1="0" x2="1" y2="1"><stop offset="0" stopColor="#8be0ff" /><stop offset="1" stopColor="#0a94f5" /></linearGradient>
          </defs>
          <path d="M0 1q0-1 1-1h13v14H0zM15.200 0H28q1 0 1 1v13H15.200zM0 15.200h14V29H1q-1 0-1-1zM15.200 15.200H29V28q0 1-1 1H15.200z" fill="url(#win)" />
        </Svg>
      </div>
      <div className="mt-[9px] flex h-[40px] w-[275px] items-center rounded-full border border-white/15 bg-white/15 pl-[14px] text-[17px] tracking-[-0.1px] text-[#d8d0d4]">
        <Svg w={18} h={20}>
          <circle cx="8" cy="8.500" r="6.800" stroke="#e8e4e6" strokeWidth="2" />
          <path d="M13 13.500l4.300 5" stroke="#e8e4e6" strokeWidth="2.400" strokeLinecap="round" />
        </Svg>
        <span className="ml-[13px] whitespace-nowrap">Search web &amp; PC</span>
        <div className="mr-[17px] ml-auto">
          <Svg w={42} h={30}>
            <path d="M26 4c3-4 8-3 9 0l6-1c-2 3-5 4-8 4l-6 1z" fill="#6257b0" />
            <circle cx="27.500" cy="5" r="2.800" fill="#f0c2a4" />
            <path d="M10 4l2-1 5 4 7 0 6 0 5 2-1 6-3 3-1 4 4 3v4l-8 .5-6-.8v-2.500l6-1-3-4-8-1.500-12-3 .5-2.500 13 .5 5-.5 1-4-8-.5z" fill="#ece3dc" />
            <path d="M22 14l9 1-1 2-9-1z" fill="#2a2433" />
            <path d="M0 13l4 2.500v3L1 16zM11 3l2-.500 2.500 3-2 1.500z" fill="#f0c2a4" />
          </Svg>
        </div>
      </div>
      <div className="ml-[3px] flex">
        <TaskApp>
          <Svg w={30} h={28}>
            <defs><linearGradient id="tv" x1="0" y1="0" x2="1" y2="1"><stop offset="0" stopColor="#fff" /><stop offset="1" stopColor="#cfcfcf" /></linearGradient></defs>
            <rect x="7.500" y="0" width="22.500" height="20" rx="1.500" fill="url(#tv)" />
            <rect x="0" y="8" width="22.500" height="20" rx="1.500" fill="#787878" fillOpacity=".88" />
          </Svg>
        </TaskApp>
        <TaskApp><Copilot id="t" size={29} /></TaskApp>
        <TaskApp run>
          <Svg w={30} h={27}>
            <defs><linearGradient id="fo" x1="0" y1="0" x2="1" y2="1"><stop offset="0" stopColor="#ffdf6b" /><stop offset="1" stopColor="#f9b60f" /></linearGradient></defs>
            <path d="M0 1.500Q0 0 1.500 0H10l3 3-3 4H0z" fill="#d99206" />
            <path d="M0 5h10l2-2h16.500q1.500 0 1.500 1.500V27H1.500Q0 27 0 25.500z" fill="url(#fo)" />
            <path d="M5 27v-5q0-3 3-3h14q3 0 3 3v5z" fill="#1070c8" />
            <path d="M10 23h10" stroke="#0a4c94" strokeWidth="1.500" />
          </Svg>
        </TaskApp>
        <TaskApp>
          <Svg w={30} h={30}>
            <defs>
              <linearGradient id="e1" x1="0" y1="0" x2="1" y2=".5"><stop offset="0" stopColor="#2aa8e8" /><stop offset=".6" stopColor="#36c8c0" /><stop offset="1" stopColor="#7be04c" /></linearGradient>
              <linearGradient id="e2" x1="0" y1="0" x2="0" y2="1"><stop offset="0" stopColor="#1b9be6" /><stop offset="1" stopColor="#0a5cb8" /></linearGradient>
            </defs>
            <path d="M0 13C1 5 7 0 15 0c9 0 15 7 15 13 0 5-4 7.500-8 7.500s-4.500-2-3.500-3.500c1.500-3-.5-7-5.500-7-6 0-12 2-13 3z" fill="url(#e1)" />
            <path d="M0 15C1 9 6 6.500 11 7s8 4 8 6c-3-3-7-1-7.500 3-.500 6 5 10 10.500 9 2-.3 4-1.500 5-1.500C25 28 20 30 15 30 7 30-.500 23.500 0 15z" fill="url(#e2)" />
            <path d="M11.500 16c-.5 6 5 10 10.500 9 2-.3 4-1.500 5-1.500-2 4-7 6.500-12 6.500-6-2-8-10-3.500-14z" fill="#0c4a94" />
          </Svg>
        </TaskApp>
        <TaskApp>
          <Svg w={30} h={27}>
            <circle cx="16" cy="4.500" r="4.500" fill="#7b83eb" />
            <circle cx="25" cy="6" r="3.200" fill="#5059c9" />
            <path d="M20 10.500h9q1 0 1 1V18c0 3-2 5.500-5 5.500s-5-2-5-5z" fill="#5059c9" />
            <path d="M9 10.500h13.500q1.500 0 1.500 1.500v7c0 5-3 8-7.500 8S9 24 9 19z" fill="#7b83eb" />
            <rect y="5.500" width="15.500" height="15" rx="1.500" fill="#464eb8" />
            <text x="7.700" y="17.500" textAnchor="middle" fontSize="12" fontWeight="700" fill="#fff" fontFamily="'Noto Sans', sans-serif">T</text>
          </Svg>
        </TaskApp>
        <TaskApp>
          <Svg w={30} h={30}>
            <path d="M9 6V2.500Q9 1 10.500 1h9Q21 1 21 2.500V6" stroke="#2aa6ee" strokeWidth="2" />
            <path d="M1 5h28v21q0 3.500-3.500 3.500h-21Q1 29.500 1 26z" fill="#f4f4f4" />
            <path d="M9.500 12h5v5h-5z" fill="#f25022" /><path d="M15.800 12h5v5h-5z" fill="#7fba00" />
            <path d="M9.500 18.200h5v5h-5z" fill="#00a4ef" /><path d="M15.800 18.200h5v5h-5z" fill="#ffb900" />
          </Svg>
        </TaskApp>
        <TaskApp>
          <Svg w={30} h={30}>
            <rect width="30" height="30" fill="#1b1b1b" />
            <rect x="11" y="7.500" width="15" height="15" fill="#76b900" />
            <path d="M3.500 15c4-6.500 14-7.500 20 0-6 7-15 6.500-20 0z" stroke="#76b900" strokeWidth="1.500" fill="#1b1b1b" />
            <path d="M8 15c2.500-4 8-4 10.500 0-2.500 4-7.500 4-10.500 0z" stroke="#76b900" strokeWidth="1.500" />
            <circle cx="13" cy="15" r="1.800" fill="#76b900" />
            <path d="M13 12c3-1 6 0 10 4" stroke="#1b1b1b" />
          </Svg>
        </TaskApp>
        <TaskApp>
          <Svg w={30} h={30}>
            <rect width="30" height="30" rx="2.500" fill="#107c10" />
            <circle cx="15" cy="15" r="12.300" fill="#fff" />
            <path d="M8 4.500c3-.5 5.500 1 7 2.500 1.500-1.500 4-3 7-2.500C18-1 12-1 8 4.500z" fill="#107c10" />
            <path d="M5.500 24.500C6.500 19 11 13.500 15 10c4 3.500 8.500 9 9.500 14.500-2-4-6-8-9.500-10.500C11.500 16.500 7.500 20.500 5.500 24.500z" fill="#107c10" />
            <path d="M12 12 7 6M18 12l5-6" stroke="#107c10" strokeWidth="1.500" />
          </Svg>
        </TaskApp>
        <TaskApp>
          <div className="relative flex size-[30px] items-center justify-center bg-[linear-gradient(60deg,#16286e_40%,#1e3fae_41%)] text-[23px] leading-[30px] font-bold">
            L
            <div className="absolute -top-[6px] -right-[6px] flex size-[20px] items-center justify-center rounded-full bg-[#f7836a] text-[14px] leading-none font-normal text-[#1c1c1c]">2</div>
          </div>
        </TaskApp>
        <TaskApp>
          <Svg w={27} h={30}>
            <path d="M0 0l13.500 7L27 0v22.500L13.500 30 0 22.500zM6 9.500v9.500l7.500 4 7.500-4V9.500L13.500 13.500z" fill="#c1272d" fillRule="evenodd" />
          </Svg>
        </TaskApp>
        <TaskApp>
          <Svg w={28} h={27}>
            <rect width="28" height="27" rx="5" fill="#300000" />
            <text x="14" y="19" textAnchor="middle" fontSize="15.500" fontWeight="700" fill="#ff9a00" fontFamily="'Noto Sans', sans-serif">Ai</text>
          </Svg>
        </TaskApp>
        <TaskApp>
          <Svg w={30} h={27}>
            <rect x="3" y="1" width="25" height="19" rx="1" fill="#1583d4" />
            <rect y="19" width="30" height="2.500" rx="1" fill="#0a5aa0" />
            <rect x="5.500" y="4.500" width="13" height="22.500" rx="1" fill="#2fb4ef" />
            <path d="M5.500 16h13v11h-13z" fill="#1684d0" />
            <path d="M9.500 6.500h5" stroke="#d8f2ff" strokeWidth="1.200" />
            <path d="M5.500 23.500h13V27h-13z" fill="#0a4f92" />
          </Svg>
        </TaskApp>
        <TaskApp run>
          <div className="relative">
            <Svg w={30} h={30}>
              <path d="M15 15 2 7.500A15 15 0 0 1 28 7.500z" fill="#e33b2e" />
              <path d="M15 15 2 7.500A15 15 0 0 0 15 30z" fill="#22a04c" />
              <path d="M15 15h13V7.500A15 15 0 0 1 14.500 30z" fill="#fcc934" />
              <path d="M15 15 28 7.500 15 7.500z" fill="#e33b2e" />
              <path d="M2 7.500 9 19l6 3-3 8C4 28-2 18 2 7.500z" fill="#22a04c" />
              <circle cx="15" cy="15" r="7" fill="#fff" />
              <circle cx="15" cy="15" r="5.600" fill="#2b78ee" />
            </Svg>
            <div className="absolute -top-[6px] -right-[7px]">
              <Svg w={20} h={20}>
                <circle cx="10" cy="10" r="10" fill="#4a3a30" />
                <path d="M2 4C5 0 9 0 9 0L5 12 1 15C-1 11 0 7 2 4z" fill="#9aa5ad" />
                <ellipse cx="12.500" cy="9.500" rx="4" ry="5.500" fill="#c99a7e" />
                <path d="M8 3c3-3 8-2 10 2-3 0-7 0-8 3L8 17 5 14z" fill="#3a2c20" />
              </Svg>
            </div>
          </div>
        </TaskApp>
        <TaskApp active>
          <Svg w={23} h={30}>
            <defs>
              <linearGradient id="p1" x1="0" y1="0" x2="1" y2="1"><stop offset="0" stopColor="#f0b40e" /><stop offset="1" stopColor="#c87f0a" /></linearGradient>
              <linearGradient id="p2" x1="0" y1="0" x2="0" y2="1"><stop offset="0" stopColor="#f8d34a" /><stop offset="1" stopColor="#e0a71c" /></linearGradient>
              <linearGradient id="p3" x1="0" y1="0" x2="0" y2="1"><stop offset="0" stopColor="#fbe48a" /><stop offset="1" stopColor="#f0c12c" /></linearGradient>
            </defs>
            <rect x="13" width="10" height="30" rx="1" fill="url(#p1)" />
            <rect x="6.500" y="7.500" width="10" height="22.500" rx="1" fill="url(#p2)" />
            <rect y="15" width="10" height="15" rx="1" fill="url(#p3)" />
          </Svg>
        </TaskApp>
      </div>
      <div className="mr-[24px] ml-auto flex">
        <div className="pt-[25px]">
          <Svg w={14} h={9}><path d="M1 8l6-6.500L13 8" stroke="#fff" strokeWidth="1.800" /></Svg>
        </div>
        <div className="ml-[24px] flex w-[34px] flex-col items-center gap-[6px] pt-[11px] tracking-[-0.3px]">
          <span>ENG</span>
          <span>IN</span>
        </div>
        <div className="ml-[20px] flex w-[81px] gap-[10px] pt-[19px]">
          <Svg w={20} h={19}>
            <path d="M1 7c5-6.500 13-6.500 18 0" stroke="#7a5a66" strokeWidth="1.500" />
            <path d="M3.500 9.800c4-4.800 9-4.800 13 0M6 12.600c2.500-3 5.500-3 8 0" stroke="#fff" strokeWidth="1.700" />
            <circle cx="10" cy="15" r="2" fill="#fff" />
          </Svg>
          <Svg w={20} h={19}>
            <path d="M1 7h3.500L9 2.500v14L4.500 12H1z" stroke="#fff" strokeWidth="1.500" strokeLinejoin="round" />
            <path d="M11.500 6.500c1.500 2 1.500 4 0 6M14 4c3 3.500 3 7.500 0 11M16.500 1.500c4 5 4 11 0 16" stroke="#fff" strokeWidth="1.400" />
          </Svg>
          <Svg w={21} h={19}>
            <rect x="2" y="4.500" width="15.500" height="12.500" rx="3" stroke="#fff" strokeWidth="1.500" />
            <rect x="4.300" y="6.800" width="11" height="8" rx="1.500" fill="#fff" />
            <path d="M19.500 8.500v4" stroke="#fff" strokeWidth="2" />
            <path d="M5 0 0 7h3.500L2 12l5.500-7H4.500z" fill="#fff" stroke="#451414" strokeWidth=".8" />
          </Svg>
        </div>
        <div className="flex w-[97px] flex-col items-end gap-[5px] pt-[11px] tracking-[-0.15px]">
          <span>21:14</span>
          <span>04-09-2025</span>
        </div>
      </div>
    </div>
  );
}

export default function App() {
  return (
    <div className="flex h-[1080px] w-[1920px] flex-col overflow-hidden bg-[#141414] font-['Noto_Sans',sans-serif]">
      <TitleBar />
      <MenuBar />
      <Ribbon />
      <div className="flex h-[852px] shrink-0">
        <Rail />
        <div className="flex w-[1782px] flex-col">
          <div className="flex h-[808px]">
            <Report />
            <div className="flex w-[41px] flex-col items-center border-l border-[#c8c8c8] bg-white pt-[17px] text-[#252423]">
              <Dbl c="#3a3a3a" />
              <div className="mt-[26px] pl-[7px]">
                <Svg w={11} h={12}>
                  <path d="M9.800 0v12M6 2v8M2 4.500v3" stroke="#3a3a3a" strokeWidth="1.500" />
                </Svg>
              </div>
              <span className="mt-[12px] pl-[2px] text-[18px] leading-none font-medium tracking-[0.1px] [writing-mode:vertical-rl]">Filters</span>
            </div>
          </div>
          <PageTabs />
        </div>
        <div className="flex w-[45px] flex-col items-center border-x border-[#5c5c5c] pt-[19px] text-white">
          <Dbl c="#eee" />
          <span className="mt-[21px] pr-[4px] text-[18.500px] leading-none font-semibold tracking-[0.15px] [writing-mode:vertical-rl]">Visualizations</span>
        </div>
        <div className="flex w-[42px] flex-col items-center pt-[19px] text-white">
          <Dbl c="#eee" />
          <span className="mt-[21px] pr-[4px] text-[18.500px] leading-none font-semibold tracking-[0.15px] [writing-mode:vertical-rl]">Data</span>
        </div>
      </div>
      <StatusBar />
      <Taskbar />
    </div>
  );
}
